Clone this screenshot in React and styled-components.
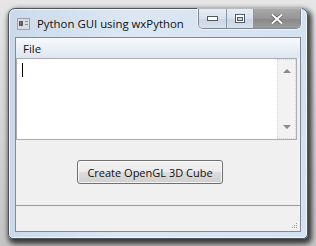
import React from "react";
import styled, { createGlobalStyle } from "styled-components";

const Global = createGlobalStyle`
  html, body { margin: 0; padding: 0; }
  body {
    width: 316px;
    height: 246px;
    overflow: hidden;
    background: linear-gradient(#e6e6e6, #c4c4c4);
    font-family: "Open Sans", "Noto Sans", sans-serif;
  }
`;

const Desk = styled.div`
  width: 316px;
  height: 246px;
  box-sizing: border-box;
  padding: 8px 0 0 8px;
`;

const Window = styled.div`
  box-sizing: border-box;
  width: 300px;
  height: 231px;
  border: 1px solid #4d545c;
  border-radius: 7px 7px 5px 5px;
  background: linear-gradient(90deg, #cbdaea 0%, #dce7f3 40%, #d4e1ef 100%);
  box-shadow: inset 0 0 0 1px rgba(255,255,255,0.7), 2px 3px 5px 2px rgba(0,0,0,0.7);
  display: flex;
  flex-direction: column;
  padding: 0 6px 6px 6px;
`;

const TitleBar = styled.div`
  height: 28px;
  display: flex;
  align-items: flex-start;
`;

const AppIcon = styled.svg`
  margin: 9px 0 0 2px;
  flex: none;
`;

const Title = styled.div`
  margin: 7px 0 0 7px;
  font-size: 11.4px;
  color: #111;
  white-space: nowrap;
  flex: 1;
`;

const Caption = styled.div`
  display: flex;
  height: 19px;
  border: 1px solid #7d8896;
  border-top: none;
  border-radius: 0 0 5px 5px;
  overflow: hidden;
  box-shadow: 0 0 0 1px rgba(255,255,255,0.6);
`;

const CapBtn = styled.div`
  width: ${p => p.$w}px;
  height: 100%;
  display: flex;
  align-items: center;
  justify-content: center;
  border-left: ${p => (p.$first ? "none" : "1px solid #8d98a6")};
  background: ${p =>
    p.$close
      ? "linear-gradient(#a9a9a9, #969696 50%, #878787 51%, #9c9c9c)"
      : "linear-gradient(#e7edf4, #d9e2ec 50%, #cbd6e3 51%, #d7e1ec)"};
`;

const Client = styled.div`
  flex: 1;
  display: flex;
  flex-direction: column;
  border: 1px solid #7f8b99;
  background: #f0f0f0;
  min-height: 0;
`;

const MenuBar = styled.div`
  height: 20px;
  display: flex;
  align-items: center;
  padding-left: 7px;
  background: linear-gradient(#f7f9fc, #e8eef6 60%, #dde6f0);
  font-size: 11.4px;
  color: #111;
`;

const TextArea = styled.div`
  height: 82px;
  margin-right: 3px;
  box-sizing: border-box;
  border: 1px solid #a9acb2;
  background: #fff;
  display: flex;
`;

const TextBody = styled.div`
  flex: 1;
  padding: 4px 0 0 5px;
`;

const Caret = styled.div`
  width: 1px;
  height: 14px;
  background: #000;
`;

const ScrollBar = styled.div`
  width: 19px;
  box-sizing: border-box;
  border: 1px dotted #d6d6d6;
  background: #f2f2f2;
  display: flex;
  flex-direction: column;
  justify-content: space-between;
  align-items: center;
  padding: 9px 0 9px;
`;

const Arrow = styled.div`
  width: 0;
  height: 0;
  border-left: 4px solid transparent;
  border-right: 4px solid transparent;
  ${p =>
    p.$down
      ? "border-top: 4px solid #8a8a8a;"
      : "border-bottom: 4px solid #8a8a8a;"}
`;

const Panel = styled.div`
  flex: 1;
  display: flex;
  align-items: flex-start;
  padding: 20px 0 0 61px;
`;

const Button = styled.button`
  width: 146px;
  height: 24px;
  box-sizing: border-box;
  border: 1px solid #707070;
  border-radius: 3px;
  background: linear-gradient(#f2f2f2, #ebebeb 50%, #dddddd 51%, #cfcfcf);
  box-shadow: inset 0 0 0 1px rgba(255,255,255,0.75);
  font-family: "Open Sans", "Noto Sans", sans-serif;
  font-size: 11px;
  color: #111;
  padding: 0;
`;

const StatusBar = styled.div`
  height: 23px;
  border-top: 1px solid #9a9a9a;
  background: #f0f0f0;
  display: flex;
  justify-content: flex-end;
  align-items: flex-end;
  padding: 0 2px 2px 0;
`;

export default function App() {
  return (
    <>
      <Global />
      <Desk>
        <Window>
          <TitleBar>
            <AppIcon width="13" height="12" viewBox="0 0 13 12">
              <rect x="0.5" y="0.5" width="12" height="11" fill="#d8dde3" stroke="#9aa3ad" />
              <rect x="2" y="3" width="4" height="5" fill="#5a5f66" />
              <rect x="3" y="4" width="2" height="2" fill="#b04a58" />
              <rect x="8" y="3" width="3" height="1" fill="#8c939b" />
              <rect x="8" y="6" width="3" height="1" fill="#8c939b" />
            </AppIcon>
            <Title>Python GUI using wxPython</Title>
            <Caption>
              <CapBtn $w={27} $first>
                <svg width="11" height="5" viewBox="0 0 11 5">
                  <rect x="0.5" y="0.5" width="10" height="4" fill="#fff" stroke="#4f5a67" />
                </svg>
              </CapBtn>
              <CapBtn $w={26}>
                <svg width="10" height="9" viewBox="0 0 10 9">
                  <rect x="0.5" y="0.5" width="9" height="8" fill="#fff" stroke="#4f5a67" />
                  <rect x="2.5" y="3.5" width="5" height="3" fill="#cfd8e2" stroke="#4f5a67" />
                </svg>
              </CapBtn>
              <CapBtn $w={46} $close>
                <svg width="12" height="10" viewBox="0 0 12 10">
                  <path d="M1.5 1 L10.5 9 M10.5 1 L1.5 9" stroke="#5f5f5f" strokeWidth="3.4" strokeLinecap="square" />
                  <path d="M1.5 1 L10.5 9 M10.5 1 L1.5 9" stroke="#ffffff" strokeWidth="2" strokeLinecap="square" />
                </svg>
              </CapBtn>
            </Caption>
          </TitleBar>
          <Client>
            <MenuBar>File</MenuBar>
            <TextArea>
              <TextBody>
                <Caret />
              </TextBody>
              <ScrollBar>
                <Arrow />
                <Arrow $down />
              </ScrollBar>
            </TextArea>
            <Panel>
              <Button>Create OpenGL 3D Cube</Button>
            </Panel>
            <StatusBar>
              <svg width="7" height="7" viewBox="0 0 7 7">
                <rect x="5" y="1" width="1" height="1" fill="#9a9a9a" />
                <rect x="3" y="3" width="1" height="1" fill="#9a9a9a" />
                <rect x="5" y="3" width="1" height="1" fill="#9a9a9a" />
                <rect x="1" y="5" width="1" height="1" fill="#9a9a9a" />
                <rect x="3" y="5" width="1" height="1" fill="#9a9a9a" />
                <rect x="5" y="5" width="1" height="1" fill="#9a9a9a" />
              </svg>
            </StatusBar>
          </Client>
        </Window>
      </Desk>
    </>
  );
}
